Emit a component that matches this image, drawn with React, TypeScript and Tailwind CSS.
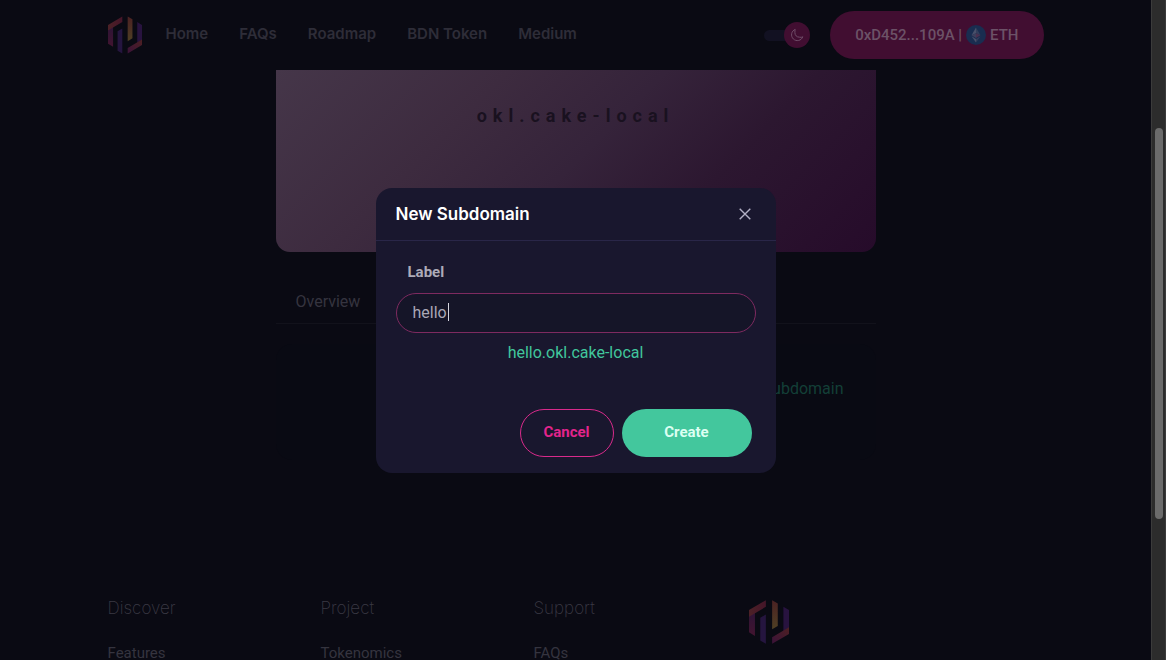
import { useState } from "react";

const NAV = ["Home", "FAQs", "Roadmap", "BDN Token", "Medium"];

const FOOTER = [
  { title: "Discover", link: "Features" },
  { title: "Project", link: "Tokenomics" },
  { title: "Support", link: "FAQs" },
];

function Logo({ id, className }: { id: string; className: string }) {
  return (
    <svg viewBox="0 0 121 132" className={className} role="img" aria-label="Bridge logo">
      <defs>
        <linearGradient id={`${id}-side`} x1="0" y1="0" x2="0" y2="1">
          <stop offset="0" stopColor="#2d1437" />
          <stop offset="1" stopColor="#42142f" />
        </linearGradient>
        <linearGradient id={`${id}-mid`} x1="0" y1="0" x2="0" y2="1">
          <stop offset="0" stopColor="#4b2123" />
          <stop offset="1" stopColor="#4f4024" />
        </linearGradient>
        <linearGradient id={`${id}-bar`} x1="0" y1="0" x2="1" y2="0">
          <stop offset="0" stopColor="#4c2126" />
          <stop offset="1" stopColor="#451529" />
        </linearGradient>
        <linearGradient id={`${id}-low`} x1="0" y1="1" x2="1" y2="0">
          <stop offset="0" stopColor="#3b1239" />
          <stop offset="1" stopColor="#4d2022" />
        </linearGradient>
      </defs>
      <path d="M0 44 18 34V108L0 97Z" fill={`url(#${id}-side)`} />
      <path d="M0 30 51 0V20L0 50Z" fill={`url(#${id}-bar)`} />
      <path d="M34 53 51 43V132L34 122Z" fill="#25153f" />
      <path d="M70 0 87 10V78L70 88Z" fill={`url(#${id}-mid)`} />
      <path d="M104 20 121 30V84L104 94Z" fill="#28133f" />
      <path d="M70 112 121 82V102L70 132Z" fill={`url(#${id}-low)`} />
    </svg>
  );
}

function EthIcon() {
  return (
    <svg viewBox="0 0 20 20" className="h-5 w-5" aria-hidden="true">
      <circle cx="10" cy="10" r="10" fill="#192d50" />
      <path d="M10 2.5 5.5 10.2 10 8.2Z" fill="#49506a" />
      <path d="M10 2.5 14.5 10.2 10 8.2Z" fill="#333e5b" />
      <path d="M5.5 10.2 10 8.2V13Z" fill="#3d3f5c" />
      <path d="M14.5 10.2 10 8.2V13Z" fill="#4a3150" />
      <path d="M5.5 11.3 10 14V17.5Z" fill="#49506a" />
      <path d="M14.5 11.3 10 14V17.5Z" fill="#333e5b" />
    </svg>
  );
}

function Header() {
  return (
    <header className="h-[70px] shrink-0 px-6">
      <div className="mx-auto flex h-full max-w-[936px] items-center">
        <a href="#home" className="mr-6">
          <Logo id="top" className="h-[38px] w-[34px]" />
        </a>
        <nav className="flex gap-[31px] pb-0.5 font-['Inter',sans-serif] text-[15px] leading-5 font-semibold text-[#2e2d38]">
          {NAV.map((item) => (
            <a key={item} href="#nav">
              {item}
            </a>
          ))}
        </nav>
        <label className="relative ml-auto flex h-[26px] w-[46px] items-center">
          <input type="checkbox" role="switch" aria-label="Dark mode" defaultChecked className="peer sr-only" />
          <span className="h-[11px] w-9 rounded-full bg-[#121122]" />
          <span className="absolute right-0 flex h-[26px] w-[26px] items-center justify-center rounded-full bg-[#410e31]">
            <svg viewBox="0 0 14 14" className="h-[14px] w-[14px]" fill="none" stroke="#704d69" strokeLinejoin="round" aria-hidden="true">
              <path d="M5.2 1.4A5.8 5.8 0 1 0 12.8 8.8 4.4 4.4 0 0 1 9.6 9.2C6.6 9.2 4.9 7.2 4.9 4.6 4.9 3.4 4.9 2.2 5.2 1.4Z" />
            </svg>
          </span>
        </label>
        <button
          type="button"
          className="ml-5 flex h-12 items-center gap-1 rounded-full bg-[#410e31] px-[25px] text-[15px] leading-5 font-medium text-[#6c5267]"
        >
          <span>0xD452...109A |</span>
          <EthIcon />
          <span>ETH</span>
        </button>
      </div>
    </header>
  );
}

function DomainPage() {
  return (
    <main className="mx-auto w-full max-w-[600px] flex-1">
      <div className="h-[182px] rounded-b-[14px] bg-[linear-gradient(135deg,#453649_0%,#3d2b3f_30%,#35233a_50%,#2c1730_70%,#260b2a_100%)] pt-[34px]">
        <h1 className="text-center text-lg leading-6 font-bold tracking-[6px] text-[#19111f]">okl.cake-local</h1>
      </div>
      <div className="mt-7 border-b border-[#12121b] px-5 pt-2.5 pb-[9px]">
        <a href="#overview" className="text-base leading-6 text-[#35343f]">
          Overview
        </a>
      </div>
      <section className="mt-5 flex h-[116px] justify-end rounded-2xl bg-[#090a13] px-8 pt-[33px]">
        <a href="#new" className="text-base leading-6 text-[#133f37]">
          New Subdomain
        </a>
      </section>
    </main>
  );
}

function Footer() {
  return (
    <footer className="h-[64px] shrink-0 px-6">
      <div className="mx-auto max-w-[936px]">
        <div className="grid max-w-[852px] grid-cols-4">
          {FOOTER.map((col) => (
            <div key={col.title}>
              <h2 className="font-['Inter',sans-serif] text-[17px] leading-6 font-extralight text-[#3a3944]">{col.title}</h2>
              <a href="#footer" className="mt-[21px] block text-[15px] leading-6 text-[#35343f]">
                {col.link}
              </a>
            </div>
          ))}
          <Logo id="foot" className="mt-1 ml-0.5 h-11 w-10" />
        </div>
      </div>
    </footer>
  );
}

function SubdomainDialog() {
  const [label, setLabel] = useState("hello");

  return (
    <div
      role="dialog"
      aria-modal="true"
      aria-labelledby="dialog-title"
      className="w-[400px] max-w-full rounded-2xl bg-[#19172e]"
    >
      <div className="flex h-[53px] items-center justify-between border-b border-[#292648] pr-[19px] pl-5">
        <h2 id="dialog-title" className="font-['Inter',sans-serif] text-[17px] leading-6 font-semibold text-white">
          New Subdomain
        </h2>
        <button type="button" aria-label="Close" className="flex h-6 w-6 items-center justify-center">
          <svg viewBox="0 0 12 12" className="h-3 w-3" stroke="#b3b0c5" strokeWidth="1.4" aria-hidden="true">
            <path d="M.7.7 11.3 11.3M11.3.7.7 11.3" />
          </svg>
        </button>
      </div>
      <form className="px-5 pt-[19px] pb-4">
        <label htmlFor="label" className="block pl-3 text-[15px] leading-6 font-bold text-[#adabb8]">
          Label
        </label>
        <div className="relative mt-[9px]">
          <input
            id="label"
            type="text"
            value={label}
            onChange={(e) => setLabel(e.target.value)}
            className="h-10 w-full rounded-full border border-[#7e2a60] bg-[#151528] px-4 text-base text-[#a9a8b6] caret-transparent outline-none"
          />
          <span className="absolute top-2.5 left-[52px] h-[18px] w-px bg-[#d5d4de]" />
        </div>
        <p className="mt-2 text-center text-base leading-6 text-[#41c69c]">{label}.okl.cake-local</p>
        <div className="mt-11 flex justify-end gap-2 pr-1">
          <button
            type="button"
            className="h-12 w-[94px] rounded-full border border-[#d82a8b] text-[15px] font-bold text-[#e3248c]"
          >
            Cancel
          </button>
          <button type="button" className="h-12 w-[130px] rounded-full bg-[#43c79d] text-[15px] font-bold text-[#dcfff2]">
            Create
          </button>
        </div>
      </form>
    </div>
  );
}

export default function App() {
  return (
    <div className="flex h-screen overflow-hidden bg-[#0a0a13] font-['Roboto',sans-serif]">
      <div className="relative flex min-w-0 flex-1 flex-col">
        <Header />
        <DomainPage />
        <Footer />
        <div className="absolute inset-0 flex items-center justify-center">
          <SubdomainDialog />
        </div>
      </div>
      {/* Scrollbar */}
      <div className="flex w-[15px] flex-col items-center border-x border-x-[#3b3b3b] bg-[#2c2c2c]">
        <div className="mt-32 h-[391px] w-2 rounded-full bg-[#6b6b6b]" />
      </div>
    </div>
  );
}
